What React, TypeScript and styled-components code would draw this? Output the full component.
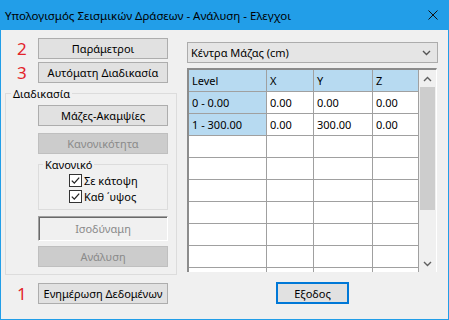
import styled, { createGlobalStyle } from "styled-components";

const GlobalStyle = createGlobalStyle`
  html, body {
    margin: 0;
    padding: 0;
    background: #f0f0f0;
  }
  body {
    font-family: "Noto Sans", "Liberation Sans", sans-serif;
    font-size: 11px;
    color: #000;
  }
  * {
    box-sizing: border-box;
  }
`;

const Window = styled.div`
  width: 449px;
  height: 320px;
  display: flex;
  flex-direction: column;
  border: 1px solid #229ee8;
  border-top: none;
  background: #f0f0f0;
  overflow: hidden;
`;

const TitleBar = styled.div`
  height: 30px;
  flex: none;
  display: flex;
  align-items: center;
  justify-content: space-between;
  padding: 0 10px 0 4px;
  background: #229ee8;
  font-size: 11.5px;
`;

const Body = styled.div`
  flex: 1;
  display: flex;
  flex-direction: column;
`;

const TopArea = styled.div`
  display: flex;
  align-items: flex-start;
`;

const LeftCol = styled.div`
  width: 176px;
  padding-left: 4px;
  display: flex;
  flex-direction: column;
`;

const NumRow = styled.div<{ $top: number }>`
  display: flex;
  align-items: center;
  margin-top: ${(p) => p.$top}px;
`;

const Num = styled.span`
  width: 33px;
  padding-left: 12px;
  color: #e3242b;
  font-size: 17px;
  line-height: 21px;
`;

const Button = styled.button<{ $top?: number }>`
  width: 130px;
  height: 21px;
  margin: ${(p) => p.$top ?? 0}px 0 0 0;
  padding: 0;
  font: inherit;
  color: #000;
  background: #e1e1e1;
  border: 1px solid #adadad;
  &:disabled {
    color: #8a8a8a;
    background: #cccccc;
    border-color: #bfbfbf;
  }
`;

const Group = styled.fieldset<{ $top: number; $width: number }>`
  width: ${(p) => p.$width}px;
  margin: ${(p) => p.$top}px 0 0 0;
  padding: 0;
  min-inline-size: 0;
  border: 1px solid #dcdcdc;
`;

const Legend = styled.legend<{ $ml: number }>`
  margin-left: ${(p) => p.$ml}px;
  padding: 0 2px;
  line-height: 15px;
`;

const GroupContent = styled.div<{ $pl: number; $pt: number; $pb: number }>`
  display: flex;
  flex-direction: column;
  padding: ${(p) => p.$pt}px 0 ${(p) => p.$pb}px ${(p) => p.$pl}px;
`;

const CheckRow = styled.label`
  display: flex;
  align-items: center;
  gap: 2px;
  height: 16px;
`;

const Sunken = styled.div`
  width: 130px;
  height: 25px;
  margin-top: 6px;
  display: flex;
  align-items: center;
  justify-content: center;
  color: #8a8a8a;
  background: #f0f0f0;
  border: 1px solid;
  border-color: #a0a0a0 #ffffff #ffffff #a0a0a0;
  box-shadow: inset 1px 1px 0 #696969;
`;

const RightCol = styled.div`
  margin-left: 10px;
  width: 251px;
  display: flex;
  flex-direction: column;
`;

const Select = styled.div`
  margin-top: 12px;
  height: 21px;
  display: flex;
  align-items: center;
  justify-content: space-between;
  padding: 0 6px 0 3px;
  background: #e5e5e5;
  border: 1px solid #acacac;
`;

const GridBox = styled.div`
  margin-top: 5px;
  width: 250px;
  height: 204px;
  display: flex;
  overflow: hidden;
  border-style: solid;
  border-width: 2px 1px 0 2px;
  border-color: #8c8c8c #ffffff #ffffff #8c8c8c;
`;

const Grid = styled.div`
  width: 230px;
  background: #ffffff;
`;

const Row = styled.div`
  display: grid;
  grid-template-columns: 78px 47px 59px 46px;
`;

const Cell = styled.div<{ $fixed?: boolean }>`
  height: 22px;
  line-height: 21px;
  padding-left: 3px;
  white-space: nowrap;
  background: ${(p) => (p.$fixed ? "#b7daf1" : "#ffffff")};
  border-right: 1px solid #a0a0a0;
  border-bottom: 1px solid #a0a0a0;
`;

const ScrollBar = styled.div`
  width: 17px;
  display: flex;
  flex-direction: column;
  align-items: center;
  background: #f0f0f0;
`;

const ArrowBox = styled.div`
  height: 17px;
  flex: none;
  display: flex;
  align-items: center;
  justify-content: center;
`;

const Thumb = styled.div`
  width: 15px;
  height: 123px;
  background: #cdcdcd;
`;

const Track = styled.div`
  flex: 1;
`;

const BottomRow = styled.div`
  display: flex;
  align-items: center;
  margin-top: 7px;
  padding-left: 4px;
`;

const ExitButton = styled.button`
  width: 73px;
  height: 22px;
  margin-left: 108px;
  padding: 0;
  font: inherit;
  color: #000;
  background: #e1e1e1;
  border: 2px solid #0078d7;
`;

const Chevron = ({ up, color }: { up?: boolean; color: string }) => (
  <svg width="9" height="6" viewBox="0 0 9 6">
    <path
      d={up ? "M1 5 L4.5 1.5 L8 5" : "M1 1 L4.5 4.5 L8 1"}
      fill="none"
      stroke={color}
      strokeWidth="1.4"
    />
  </svg>
);

const CheckIcon = () => (
  <svg width="13" height="13" viewBox="0 0 13 13">
    <rect x="0.5" y="0.5" width="12" height="12" fill="#fff" stroke="#333" />
    <path d="M2.8 6.6 L5.3 9.1 L10.2 3.6" fill="none" stroke="#222" strokeWidth="1.3" />
  </svg>
);

const CloseIcon = () => (
  <svg width="10" height="10" viewBox="0 0 10 10">
    <path d="M0.5 0.5 L9.5 9.5 M9.5 0.5 L0.5 9.5" stroke="#111" strokeWidth="1" />
  </svg>
);

const rows = [
  ["0 - 0.00", "0.00", "0.00", "0.00"],
  ["1 - 300.00", "0.00", "300.00", "0.00"],
];

export default function App() {
  return (
    <>
      <GlobalStyle />
      <Window>
        <TitleBar>
          <span>Υπολογισμός Σεισμικών Δράσεων - Ανάλυση - Ελεγχοι</span>
          <CloseIcon />
        </TitleBar>
        <Body>
          <TopArea>
            <LeftCol>
              <NumRow $top={8}>
                <Num>2</Num>
                <Button>Παράμετροι</Button>
              </NumRow>
              <NumRow $top={3}>
                <Num>3</Num>
                <Button>Αυτόματη Διαδικασία</Button>
              </NumRow>
              <Group $top={3} $width={172}>
                <Legend $ml={5}>Διαδικασία</Legend>
                <GroupContent $pl={32} $pt={4} $pb={7}>
                  <Button>Μάζες-Ακαμψίες</Button>
                  <Button $top={7} disabled>
                    Κανονικότητα
                  </Button>
                  <Group $top={3} $width={130}>
                    <Legend $ml={4}>Κανονικό</Legend>
                    <GroupContent $pl={30} $pt={0} $pb={5}>
                      <CheckRow>
                        <CheckIcon />
                        Σε κάτοψη
                      </CheckRow>
                      <CheckRow>
                        <CheckIcon />
                        Καθ ΄υψος
                      </CheckRow>
                    </GroupContent>
                  </Group>
                  <Sunken>Ισοδύναμη</Sunken>
                  <Button $top={5} disabled>
                    Ανάλυση
                  </Button>
                </GroupContent>
              </Group>
            </LeftCol>
            <RightCol>
              <Select>
                <span>Κέντρα Μάζας (cm)</span>
                <Chevron color="#555" />
              </Select>
              <GridBox>
                <Grid>
                  <Row>
                    <Cell $fixed>Level</Cell>
                    <Cell $fixed>X</Cell>
                    <Cell $fixed>Y</Cell>
                    <Cell $fixed>Z</Cell>
                  </Row>
                  {rows.map((r) => (
                    <Row key={r[0]}>
                      <Cell $fixed>{r[0]}</Cell>
                      <Cell>{r[1]}</Cell>
                      <Cell>{r[2]}</Cell>
                      <Cell>{r[3]}</Cell>
                    </Row>
                  ))}
                  {Array.from({ length: 7 }).map((_, i) => (
                    <Row key={i}>
                      <Cell />
                      <Cell />
                      <Cell />
                      <Cell />
                    </Row>
                  ))}
                </Grid>
                <ScrollBar>
                  <ArrowBox>
                    <Chevron up color="#606060" />
                  </ArrowBox>
                  <Thumb />
                  <Track />
                  <ArrowBox>
                    <Chevron color="#606060" />
                  </ArrowBox>
                </ScrollBar>
              </GridBox>
            </RightCol>
          </TopArea>
          <BottomRow>
            <Num>1</Num>
            <Button>Ενημέρωση Δεδομένων</Button>
            <ExitButton>Εξοδος</ExitButton>
          </BottomRow>
        </Body>
      </Window>
    </>
  );
}
